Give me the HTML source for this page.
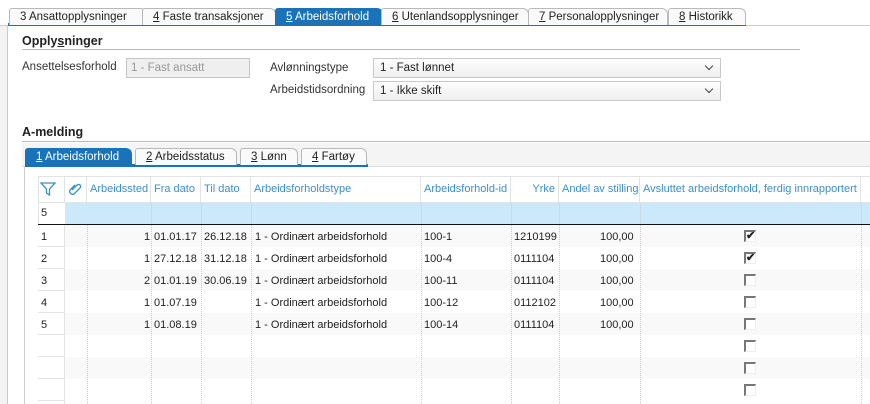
<!DOCTYPE html>
<html><head><meta charset="utf-8"><style>
*{margin:0;padding:0;box-sizing:border-box}
html,body{width:870px;height:404px;overflow:hidden}
body{background:#fff;font-family:"Liberation Sans",Tahoma,sans-serif;font-size:11px;color:#222;position:relative}
.a{position:absolute}
u{text-decoration:underline}
.tab{position:absolute;top:8px;height:17px;border:1px solid #b9b9b9;border-bottom:none;background:#fafafa;padding:2px 0 0 10px;font-size:11.5px;white-space:nowrap;border-radius:3px 6px 0 0}
.tab.act{background:#1a72b8;color:#fff;border-color:#1a72b8}
.lbl{position:absolute;font-size:11.5px;color:#333}
.sel{position:absolute;height:20px;border:1px solid #c9c9c9;background:linear-gradient(#fdfdfd,#efefef);padding:3px 6px;font-size:11.5px}
.sel:after{content:"";position:absolute;right:8px;top:4px;width:5px;height:5px;border-right:1px solid #444;border-bottom:1px solid #444;transform:rotate(45deg)}
.h{position:absolute;top:177px;height:26px;color:#3a8fd0;padding:6px 3px;white-space:nowrap;border-right:1px solid #e3e3e3;overflow:hidden}
.row{position:absolute;left:38px;width:832px;height:22px}
.c{position:absolute;white-space:nowrap}
.vl{position:absolute;top:203px;height:201px;border-left:1px dotted #ccc}
.cb{position:absolute;left:744px;width:12px;height:12px;border:1px solid #eee;border-left:2px solid #777;border-top:2px solid #777;background:#fff;font-size:11px;line-height:9px;text-align:center;font-weight:bold}
</style></head><body>
<div class="a" style="left:0;top:25px;width:870px;height:1px;background:#ccc"></div>
<div class="a" style="left:8px;top:23px;width:738px;height:3px;background:#1a72b8"></div>
<div class="tab" style="left:9px;width:138px">3 Ansattopplysninger</div>
<div class="tab" style="left:142px;width:134px"><u>4</u> Faste transaksjoner</div>
<div class="tab act" style="left:275px;width:108px"><u>5</u> Arbeidsforhold</div>
<div class="tab" style="left:381px;width:148px"><u>6</u> Utenlandsopplysninger</div>
<div class="tab" style="left:528px;width:140px"><u>7</u> Personalopplysninger</div>
<div class="tab" style="left:668px;width:78px"><u>8</u> Historikk</div>
<div class="a" style="left:0;top:26px;width:8px;height:378px;background:#f3f3f3;border-right:1px solid #ccc"></div>

<div class="a" style="left:22px;top:34px;font-weight:bold;font-size:12.5px">Opply<u>s</u>ninger</div>
<div class="a" style="left:22px;top:49px;width:778px;height:1px;background:#bbb"></div>
<div class="lbl" style="left:22px;top:61px">Ansettelsesforhold</div>
<div class="a" style="left:126px;top:58px;width:124px;height:20px;border:1px solid #c6c6c6;background:#efefef;color:#999;padding:3px 4px;font-size:11.5px">1 - Fast ansatt</div>
<div class="lbl" style="left:270px;top:62px">Avlønningstype</div>
<div class="sel" style="left:373px;top:58px;width:348px">1 - Fast lønnet</div>
<div class="lbl" style="left:270px;top:84px">Arbeidstidsordning</div>
<div class="sel" style="left:373px;top:81px;width:348px">1 - Ikke skift</div>

<div class="a" style="left:22px;top:125px;font-weight:bold;font-size:12.5px">A-melding</div>
<div class="a" style="left:22px;top:141px;width:848px;height:1px;background:#bbb"></div>
<div class="a" style="left:22px;top:143px;width:848px;height:24px;background:#f4f4f4;border-bottom:1px solid #ddd"></div>
<div class="a" style="left:25px;top:164px;width:343px;height:3px;background:#1a72b8"></div>
<div class="tab act" style="left:25px;top:148px;width:107px"><u>1</u> Arbeidsforhold</div>
<div class="tab" style="left:135px;top:148px;width:102px"><u>2</u> Arbeidsstatus</div>
<div class="tab" style="left:240px;top:148px;width:58px"><u>3</u> Lønn</div>
<div class="tab" style="left:301px;top:148px;width:66px"><u>4</u> Fartøy</div>
<div class="a" style="left:24px;top:167px;width:1px;height:237px;background:#ccc"></div>

<div class="a" style="left:38px;top:176px;width:832px;height:1px;background:#e3e3e3"></div>
<div class="a" style="left:38px;top:176px;width:1px;height:228px;background:#e3e3e3"></div>
<div class="h" style="left:38px;width:27px;padding:5px 0 0 2px"><svg width="16" height="14" viewBox="0 0 16 14"><path d="M1 1H15L9.5 7V13L6.5 11V7Z" fill="none" stroke="#3a8fd0" stroke-width="1.3"/></svg></div>
<div class="h" style="left:65px;width:22px;padding:5px 0 0 3px"><svg width="14" height="14" viewBox="0 0 14 14"><path d="M4 8L9 3A2 2 0 0 1 12 6L6 12A3 3 0 0 1 2 8L7 3" fill="none" stroke="#3a8fd0" stroke-width="1.3"/></svg></div>
<div class="h" style="left:87px;width:64px">Arbeidssted</div>
<div class="h" style="left:151px;width:50px">Fra dato</div>
<div class="h" style="left:201px;width:50px">Til dato</div>
<div class="h" style="left:251px;width:170px">Arbeidsforholdstype</div>
<div class="h" style="left:421px;width:90px">Arbeidsforhold-id</div>
<div class="h" style="left:511px;width:48px;text-align:right">Yrke</div>
<div class="h" style="left:559px;width:81px">Andel av stilling</div>
<div class="h" style="left:640px;width:221px">Avsluttet arbeidsforhold, ferdig innrapportert</div>
<div class="a" style="left:38px;top:202px;width:832px;height:1px;background:#e3e3e3"></div>
<div class="a" style="left:65px;top:203px;width:805px;height:21px;background:#cce8fb"></div>
<div class="a" style="left:41px;top:207px">5</div>
<div class="a" style="left:38px;top:224px;width:832px;height:1.5px;background:#111"></div>

<div class="row" style="top:225px;background:#f9f9f9"></div>
<div class="row" style="top:247px;background:#fff"></div>
<div class="row" style="top:269px;background:#f9f9f9"></div>
<div class="row" style="top:291px;background:#fff"></div>
<div class="row" style="top:313px;background:#f9f9f9"></div>
<div class="row" style="top:335px;background:#fff"></div>
<div class="row" style="top:357px;background:#f9f9f9"></div>
<div class="row" style="top:379px;background:#fff;height:25px"></div>

<div class="a" style="left:38px;top:225px;width:27px;height:179px;border-right:1px solid #e3e3e3;background-image:repeating-linear-gradient(#fff 0 21px,#e3e3e3 21px 22px)"></div>
<div class="vl" style="left:87px;top:225px;height:179px"></div>
<div class="vl" style="left:151px"></div>
<div class="vl" style="left:201px"></div>
<div class="vl" style="left:251px"></div>
<div class="vl" style="left:421px"></div>
<div class="vl" style="left:511px"></div>
<div class="vl" style="left:559px"></div>
<div class="vl" style="left:640px"></div>
<div class="vl" style="left:861px"></div>

<div class="c" style="left:41px;top:231px">1</div><div class="c" style="left:144px;top:231px">1</div><div class="c" style="left:154px;top:231px">01.01.17</div><div class="c" style="left:204px;top:231px">26.12.18</div><div class="c" style="left:255px;top:231px">1 - Ordinært arbeidsforhold</div><div class="c" style="left:424px;top:231px">100-1</div><div class="c" style="left:514px;top:231px">1210199</div><div class="c" style="left:600px;top:231px">100,00</div>
<div class="c" style="left:41px;top:253px">2</div><div class="c" style="left:144px;top:253px">1</div><div class="c" style="left:154px;top:253px">27.12.18</div><div class="c" style="left:204px;top:253px">31.12.18</div><div class="c" style="left:255px;top:253px">1 - Ordinært arbeidsforhold</div><div class="c" style="left:424px;top:253px">100-4</div><div class="c" style="left:514px;top:253px">0111104</div><div class="c" style="left:600px;top:253px">100,00</div>
<div class="c" style="left:41px;top:275px">3</div><div class="c" style="left:144px;top:275px">2</div><div class="c" style="left:154px;top:275px">01.01.19</div><div class="c" style="left:204px;top:275px">30.06.19</div><div class="c" style="left:255px;top:275px">1 - Ordinært arbeidsforhold</div><div class="c" style="left:424px;top:275px">100-11</div><div class="c" style="left:514px;top:275px">0111104</div><div class="c" style="left:600px;top:275px">100,00</div>
<div class="c" style="left:41px;top:297px">4</div><div class="c" style="left:144px;top:297px">1</div><div class="c" style="left:154px;top:297px">01.07.19</div><div class="c" style="left:255px;top:297px">1 - Ordinært arbeidsforhold</div><div class="c" style="left:424px;top:297px">100-12</div><div class="c" style="left:514px;top:297px">0112102</div><div class="c" style="left:600px;top:297px">100,00</div>
<div class="c" style="left:41px;top:319px">5</div><div class="c" style="left:144px;top:319px">1</div><div class="c" style="left:154px;top:319px">01.08.19</div><div class="c" style="left:255px;top:319px">1 - Ordinært arbeidsforhold</div><div class="c" style="left:424px;top:319px">100-14</div><div class="c" style="left:514px;top:319px">0111104</div><div class="c" style="left:600px;top:319px">100,00</div>

<div class="cb" style="top:230px">✔</div>
<div class="cb" style="top:252px">✔</div>
<div class="cb" style="top:274px"></div>
<div class="cb" style="top:296px"></div>
<div class="cb" style="top:318px"></div>
<div class="cb" style="top:340px"></div>
<div class="cb" style="top:362px"></div>
<div class="cb" style="top:384px"></div>
</body></html>
